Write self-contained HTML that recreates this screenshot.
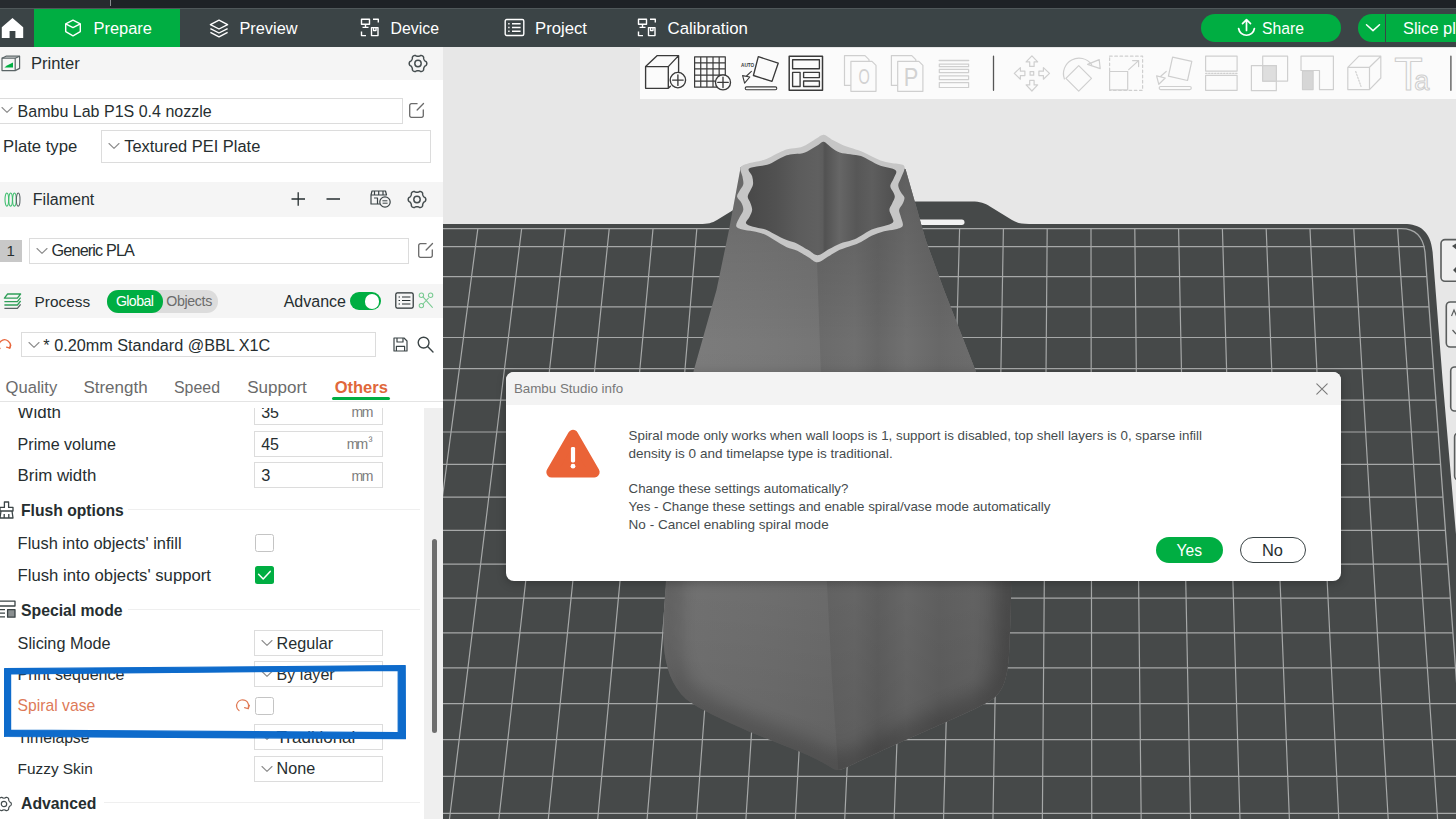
<!DOCTYPE html><html><head><meta charset="utf-8"><title>Bambu Studio</title><style>
*{margin:0;padding:0;box-sizing:border-box}
html,body{width:1456px;height:819px;overflow:hidden;background:#e7e7e7;font-family:"Liberation Sans",sans-serif}
.t{position:absolute;white-space:nowrap;line-height:1}
.b{position:absolute}
svg{position:absolute;overflow:visible}
#vp{left:0;top:0}
#panel{position:absolute;left:0;top:47px;width:443px;height:772px;background:#fff;overflow:hidden}
#top{position:absolute;left:0;top:0;width:1456px;height:47px;background:#3b4446;overflow:hidden}
#dlg{position:absolute;left:506px;top:372px;width:835px;height:209px;background:#fff;border-radius:8px;overflow:hidden;box-shadow:0 2px 10px rgba(0,0,0,.25)}
.inp{position:absolute;border:1px solid #dcdcdc;background:#fff}
</style></head><body><svg id="vp" width="1456" height="819" viewBox="0 0 1456 819"><defs>
<linearGradient id="gl" gradientUnits="userSpaceOnUse" x1="660" y1="0" x2="840" y2="0"><stop offset="0" stop-color="#8a8a8a"/><stop offset="0.12" stop-color="#7c7c7c"/><stop offset="0.55" stop-color="#797979"/><stop offset="1" stop-color="#747474"/></linearGradient>
<linearGradient id="gr" gradientUnits="userSpaceOnUse" x1="820" y1="0" x2="1012" y2="0"><stop offset="0" stop-color="#6b6b6b"/><stop offset="0.18" stop-color="#6f6f6f"/><stop offset="0.3" stop-color="#676767"/><stop offset="0.45" stop-color="#707070"/><stop offset="0.62" stop-color="#686868"/><stop offset="0.8" stop-color="#6c6c6c"/><stop offset="1" stop-color="#626262"/></linearGradient>
<linearGradient id="gv" gradientUnits="userSpaceOnUse" x1="0" y1="160" x2="0" y2="770"><stop offset="0" stop-color="#000" stop-opacity="0.16"/><stop offset="0.3" stop-color="#000" stop-opacity="0"/><stop offset="0.62" stop-color="#000" stop-opacity="0.07"/><stop offset="1" stop-color="#000" stop-opacity="0.16"/></linearGradient>
<linearGradient id="gh" gradientUnits="userSpaceOnUse" x1="745" y1="0" x2="900" y2="0"><stop offset="0" stop-color="#484848"/><stop offset="0.2" stop-color="#515151"/><stop offset="0.35" stop-color="#5c5c5c"/><stop offset="0.47" stop-color="#606060"/><stop offset="0.5" stop-color="#5d5d5d"/><stop offset="0.515" stop-color="#525252"/><stop offset="0.61" stop-color="#666"/><stop offset="0.72" stop-color="#575757"/><stop offset="0.82" stop-color="#5e5e5e"/><stop offset="1" stop-color="#4c4c4c"/></linearGradient>
<filter id="bl" x="-20%" y="-20%" width="140%" height="140%"><feGaussianBlur stdDeviation="9"/></filter><clipPath id="cp"><rect x="443" y="47" width="1013" height="772"/></clipPath>
</defs><g clip-path="url(#cp)"><rect x="443" y="47" width="1013" height="772" fill="#e7e7e7"/><path d="M430 224 H700 C708 224 712 223 717 220 L739 206.5 C744 203.3 749 201.6 757 201.6 H972 C980 201.6 985 203.3 990 206.5 L1012 220 C1017 223 1021 224 1029 224 H1404 C1420 224 1430.5 231 1432.6 252 L1442.6 380 L1456.5 540 L1482 830 H430 Z" fill="#464949"/><rect x="917" y="219.6" width="47.5" height="5.4" rx="2.7" fill="#f2f2f2"/><path d="M430 246.63 L1424.59 246.63 M430 276.53 L1426.79 276.53 M430 306.81 L1429.01 306.81 M430 337.49 L1431.26 337.49 M430 368.58 L1433.54 368.58 M430 400.07 L1435.86 400.07 M430 431.99 L1438.20 431.99 M430 464.34 L1440.57 464.34 M430 497.13 L1442.98 497.13 M430 530.36 L1445.42 530.36 M430 564.05 L1447.89 564.05 M430 598.20 L1450.40 598.20 M430 632.83 L1452.94 632.83 M430 667.94 L1455.52 667.94 M430 703.55 L1458.13 703.55 M430 739.66 L1460.78 739.66 M430 776.30 L1463.47 776.30 M430 813.46 L1466.20 813.46 M390.26 228.6 L299.60 830 M434.06 228.6 L349.11 830 M477.85 228.6 L398.62 830 M521.65 228.6 L448.13 830 M565.45 228.6 L497.65 830 M609.24 228.6 L547.16 830 M653.04 228.6 L596.67 830 M696.83 228.6 L646.18 830 M740.63 228.6 L695.69 830 M784.43 228.6 L745.20 830 M828.22 228.6 L794.71 830 M872.02 228.6 L844.23 830 M915.81 228.6 L893.74 830 M959.61 228.6 L943.25 830 M1003.41 228.6 L992.76 830 M1047.20 228.6 L1042.27 830 M1091.00 228.6 L1091.78 830 M1134.80 228.6 L1141.29 830 M1178.59 228.6 L1190.81 830 M1222.39 228.6 L1240.32 830 M1266.18 228.6 L1289.83 830 M1309.98 228.6 L1339.34 830 M1353.78 228.6 L1388.85 830 M1397.57 228.6 L1438.36 830" fill="none" stroke="#a6a8a8" stroke-width="1.2"/><path d="M430 228.6 H1401.3 Q1422.3 228.6 1425.0 252 L1467.4 830" fill="none" stroke="#a6a8a8" stroke-width="1.3"/><rect x="1441.0" y="239.6" width="40" height="41.7" rx="4" fill="#efefef" stroke="#5a5d5d" stroke-width="1.6"/><rect x="1446.3" y="302.0" width="40" height="45.0" rx="4" fill="#efefef" stroke="#5a5d5d" stroke-width="1.6"/><rect x="1450.7" y="367.0" width="40" height="44.0" rx="4" fill="#efefef" stroke="#5a5d5d" stroke-width="1.6"/><rect x="1454.6" y="433.0" width="40" height="47.0" rx="4" fill="#efefef" stroke="#5a5d5d" stroke-width="1.6"/><path d="M1452 246 L1457 250 L1457 243 Z M1453 270 L1457 266 V274 Z" fill="#4a4d4d"/><path d="M1451.5 316 L1454 310 L1456.5 316 M1452.5 330 L1456 334" fill="none" stroke="#5a5d5d" stroke-width="1.2"/><clipPath id="vc"><path d="M740.7 167 L729 230 L716.5 290 L693.6 371 C683 430 670 520 666 581 C664 610 662.6 628 663.8 645 C665.5 668 672 686 686 699 C700 710 722 719 750 732 L798 751 C815 758 826 764 832 768 C836 770.6 840 770.6 845 768 C856 763 872 755 895.5 744.5 L945 722.5 C968 712 985 705 994 698 C1004 690 1007.5 676 1009 655 C1010 630 1011.5 605 1011 581 C1008 520 990 430 975.7 371 L944 290 L925.7 240 L905.5 169 L820 150 Z"/></clipPath><g clip-path="url(#vc)"><path d="M640 140 H1040 V790 H640 Z" fill="url(#gl)"/><path d="M817 230 L817 262 L820.8 371 L826.8 581.5 L832 680 L838.5 772 L1040 790 V140 H817 Z" fill="url(#gr)"/><path d="M640 140 H1040 V790 H640 Z" fill="url(#gv)"/><path d="M669 545 C667 560 666.5 570 666 581 C664 610 662.6 628 663.8 645 C665.5 668 672 686 686 699 C700 710 722 719 750 732 L798 751 C815 758 826 764 832 768 C836 770.6 840 770.6 845 768 C856 763 872 755 895.5 744.5 L945 722.5 C968 712 985 705 994 698 C1004 690 1007.5 676 1009 655 C1010 630 1011.5 605 1011 581 C1010.6 570 1010 560 1009 545" fill="none" stroke="#000" stroke-opacity="0.20" stroke-width="30" filter="url(#bl)"/></g><path d="M823.86 134.74 C826.51 135.03 829.76 138.43 832.71 140.05 C835.66 141.68 838.61 143.21 841.56 144.48 C844.52 145.75 847.17 146.55 850.42 147.67 C853.66 148.79 857.80 149.91 861.04 151.21 C864.29 152.51 866.65 153.92 869.90 155.46 C873.14 156.99 876.98 159.15 880.52 160.42 C884.06 161.69 887.46 162.34 891.15 163.07 C894.84 163.81 900.44 163.81 902.66 164.84 C904.87 165.88 904.72 167.06 904.43 169.27 C904.13 171.48 901.92 175.47 900.89 178.13 C899.85 180.78 898.23 182.85 898.23 185.21 C898.23 187.57 899.85 190.23 900.89 192.29 C901.92 194.36 904.13 195.69 904.43 197.60 C904.72 199.52 903.54 201.74 902.66 203.80 C901.77 205.87 899.41 207.79 899.12 210.00 C898.82 212.21 900.30 214.43 900.89 217.08 C901.48 219.74 903.69 223.87 902.66 225.94 C901.63 228.00 897.79 228.59 894.69 229.48 C891.59 230.37 887.90 230.22 884.06 231.25 C880.23 232.28 875.50 233.91 871.67 235.68 C867.83 237.45 864.29 240.25 861.04 241.88 C857.80 243.50 855.73 244.09 852.19 245.42 C848.65 246.75 843.63 248.07 839.79 249.85 C835.96 251.62 832.86 253.98 829.17 256.04 C825.48 258.11 821.20 262.09 817.66 262.24 C814.12 262.39 811.31 258.85 807.92 256.93 C804.52 255.01 800.83 252.35 797.29 250.73 C793.75 249.11 790.50 248.96 786.67 247.19 C782.83 245.42 777.81 242.17 774.27 240.11 C770.73 238.04 768.96 236.27 765.42 234.79 C761.88 233.32 756.86 232.14 753.02 231.25 C749.18 230.37 745.20 230.37 742.40 229.48 C739.59 228.59 736.64 228.00 736.20 225.94 C735.76 223.87 738.56 219.74 739.74 217.08 C740.92 214.43 742.99 212.36 743.28 210.00 C743.58 207.64 742.54 205.13 741.51 202.92 C740.48 200.70 737.38 198.79 737.08 196.72 C736.79 194.65 738.71 192.59 739.74 190.52 C740.77 188.46 742.84 186.68 743.28 184.32 C743.72 181.96 742.84 179.16 742.40 176.35 C741.95 173.55 739.44 169.71 740.63 167.50 C741.81 165.29 745.94 164.25 749.48 163.07 C753.02 161.89 758.33 161.45 761.88 160.42 C765.42 159.38 767.48 158.35 770.73 156.88 C773.98 155.40 778.40 152.89 781.35 151.56 C784.31 150.23 785.19 149.64 788.44 148.91 C791.68 148.17 797.29 148.17 800.83 147.14 C804.38 146.10 807.03 144.18 809.69 142.71 C812.34 141.23 814.41 139.61 816.77 138.28 C819.13 136.95 821.20 134.44 823.86 134.74 Z" fill="#c6c6c6"/><path d="M823.86 141.82 C825.92 142.21 828.28 145.36 830.94 147.14 C833.59 148.91 836.55 151.27 839.79 152.45 C843.04 153.63 846.88 153.63 850.42 154.22 C853.96 154.81 857.80 154.96 861.04 155.99 C864.29 157.02 866.65 158.79 869.90 160.42 C873.14 162.04 876.24 164.11 880.52 165.73 C884.80 167.35 893.36 168.09 895.57 170.16 C897.79 172.22 894.69 175.47 893.80 178.13 C892.92 180.78 890.26 183.59 890.26 186.09 C890.26 188.60 893.07 191.26 893.80 193.18 C894.54 195.10 894.98 195.83 894.69 197.60 C894.39 199.38 892.92 201.74 892.03 203.80 C891.15 205.87 889.38 207.79 889.38 210.00 C889.38 212.21 891.44 215.02 892.03 217.08 C892.62 219.15 894.25 220.92 892.92 222.40 C891.59 223.87 887.61 224.76 884.06 225.94 C880.52 227.12 875.50 227.86 871.67 229.48 C867.83 231.10 864.29 233.91 861.04 235.68 C857.80 237.45 855.73 238.78 852.19 240.11 C848.65 241.43 843.63 242.17 839.79 243.65 C835.96 245.12 832.86 247.04 829.17 248.96 C825.48 250.88 821.20 255.01 817.66 255.16 C814.12 255.31 811.31 251.76 807.92 249.85 C804.52 247.93 800.83 245.27 797.29 243.65 C793.75 242.02 790.50 241.73 786.67 240.11 C782.83 238.48 777.81 235.68 774.27 233.91 C770.73 232.14 768.96 230.66 765.42 229.48 C761.88 228.30 756.27 227.86 753.02 226.82 C749.77 225.79 746.53 224.91 745.94 223.28 C745.35 221.66 748.45 219.30 749.48 217.08 C750.51 214.87 751.99 212.36 752.14 210.00 C752.28 207.64 751.10 205.13 750.36 202.92 C749.63 200.70 747.71 198.79 747.71 196.72 C747.71 194.65 749.48 192.59 750.36 190.52 C751.25 188.46 752.73 186.68 753.02 184.32 C753.32 181.96 752.87 178.86 752.14 176.35 C751.40 173.85 747.86 170.89 748.59 169.27 C749.33 167.65 753.46 167.35 756.56 166.62 C759.66 165.88 763.94 165.88 767.19 164.84 C770.43 163.81 773.09 161.89 776.04 160.42 C778.99 158.94 782.24 157.02 784.90 155.99 C787.55 154.96 789.03 154.66 791.98 154.22 C794.93 153.78 799.36 154.22 802.60 153.33 C805.85 152.45 808.80 150.32 811.46 148.91 C814.12 147.49 816.48 146.01 818.54 144.83 C820.61 143.65 821.79 141.44 823.86 141.82 Z" fill="url(#gh)"/></g></svg><div class="b" style="left:640.2px;top:48.0px;width:815.8px;height:51.0px;background:#fbfbfb"></div><svg style="left:0;top:0" width="1456" height="110" viewBox="0 0 1456 110" fill="none" stroke-linejoin="round" stroke-linecap="round"><g stroke="#3a3a3a" stroke-width="1.35"><path d="M645.6 66.6 H668.3 V88.3 H645.6 Z M645.6 66.6 L657.3 55.6 H678.6 L668.3 66.6 M678.6 55.6 V72 M668.3 88.3 L670.4 86.2"/><circle cx="677.9" cy="80.1" r="7.7" fill="#fbfbfb"/><path d="M672.6 80.1 H683.2 M677.9 74.8 V85.4"/><path d="M694.60 56.8 V87.2 M694.6 56.80 H725.3 M700.74 56.8 V87.2 M694.6 62.88 H725.3 M706.88 56.8 V87.2 M694.6 68.96 H725.3 M713.02 56.8 V87.2 M694.6 75.04 H725.3 M719.16 56.8 V87.2 M694.6 81.12 H725.3 M725.30 56.8 V87.2 M694.6 87.20 H725.3" stroke-width="1.2"/><circle cx="723" cy="82.4" r="7.5" fill="#fbfbfb"/><path d="M717.8 82.4 H728.2 M723 77.2 V87.6"/><path d="M758.3 56.7 L778.2 63.2 L772 81.4 L753.4 75.5 Z"/><path d="M751.4 71.4 L746.5 76 M742.6 75.6 L749.8 77 L744.6 83.2 Z" stroke-width="1.1"/><rect x="745.2" y="86.9" width="31.6" height="2.8" rx="1.4" stroke-width="1.1"/><rect x="789.2" y="56.3" width="33.3" height="33.9" stroke-width="1.5"/><rect x="792.6" y="59.7" width="26.8" height="9"/><rect x="792.6" y="72.4" width="7.5" height="14.1"/><rect x="803.6" y="72.4" width="15.8" height="5.2"/><rect x="803.6" y="81" width="15.8" height="5.5"/><path d="M993.5 56.2 V90.3 M1450.9 56.2 V90.3" stroke="#555" stroke-width="1.3"/></g><g stroke="#cfcfcf" stroke-width="1.2"><path d="M844.5 55.6 H865.0 L869.0 59.6 V85.4 H844.5 Z" fill="#fbfbfb"/><path d="M850.9 61.3 H872.0 L876.0 65.3 V91.3 H850.9 Z" fill="#fbfbfb"/><path d="M891.4 55.6 H911.8 L915.8 59.6 V85.4 H891.4 Z" fill="#fbfbfb"/><path d="M897.7 61.3 H918.9 L922.9 65.3 V91.3 H897.7 Z" fill="#fbfbfb"/><path d="M939.3 60.5 H968.6" stroke-width="1.6"/><rect x="939.3" y="64.1" width="29.3" height="2.6"/><rect x="939.3" y="69.4" width="29.3" height="3.2"/><rect x="939.3" y="75.8" width="29.3" height="3.8"/><rect x="939.3" y="82.6" width="29.3" height="4.9"/><path d="M-2.2 -7 V-11.5 H-5.8 L0 -17.6 L5.8 -11.5 H2.2 V-7 Z" transform="translate(1031.9 73.4) rotate(0)"/><path d="M-2.2 -7 V-11.5 H-5.8 L0 -17.6 L5.8 -11.5 H2.2 V-7 Z" transform="translate(1031.9 73.4) rotate(90)"/><path d="M-2.2 -7 V-11.5 H-5.8 L0 -17.6 L5.8 -11.5 H2.2 V-7 Z" transform="translate(1031.9 73.4) rotate(180)"/><path d="M-2.2 -7 V-11.5 H-5.8 L0 -17.6 L5.8 -11.5 H2.2 V-7 Z" transform="translate(1031.9 73.4) rotate(270)"/><rect x="1030.1" y="71.6" width="3.6" height="3.6"/><path d="M1078.7 65.6 L1091.5 78.4 L1078.7 91.2 L1065.9 78.4 Z"/><path d="M1064.4 79 A15.6 15.6 0 0 1 1091.6 64.4"/><path d="M1087.6 64.4 L1099.2 59.6 L1100.2 68.6 Z"/><rect x="1109.6" y="56.2" width="33" height="34.1" stroke-dasharray="2.6 2.6"/><rect x="1109.6" y="71.5" width="18.1" height="18.4" fill="#fbfbfb"/><path d="M1128.7 69.6 L1138.3 60.9 M1132.6 60.6 H1138.6 V66.6"/><path d="M1172.6 57.1 L1191.8 61.3 L1187.5 80.5 L1168.4 76.2 Z"/><path d="M1166.2 71.5 L1161 76 M1156.6 75.8 L1165.2 78 L1158.8 84.3 Z"/><rect x="1159.2" y="86.5" width="32.1" height="3.1" rx="1.5"/><rect x="1205.6" y="56.2" width="31.5" height="14.9"/><rect x="1205.6" y="75.4" width="31.5" height="14.9"/><path d="M1205.6 73.3 H1237.1" stroke-dasharray="1.5 1.5"/><rect x="1262.7" y="56.2" width="24.9" height="24.9"/><rect x="1251.4" y="65.6" width="24.9" height="25.1"/><rect x="1262.7" y="65.6" width="13.6" height="15.5" fill="#dedede"/><path d="M1301 56.2 H1333.4 V89.6 H1319.5 V70.5 H1301 Z"/><rect x="1302.5" y="71.1" width="10.6" height="18.5" fill="#d6d6d6"/><path d="M1347.8 67.3 H1369.5 V89.6 H1347.8 Z M1347.8 67.3 L1358.9 56.2 H1380.8 L1369.5 67.3 M1380.8 56.2 V78 L1369.5 89.6"/><path d="M1355.7 71.5 L1361 86.4" stroke-dasharray="1.4 1.6"/></g><text x="741" y="67" font-family="Liberation Sans,sans-serif" font-size="5.2" font-weight="bold" fill="#3a3a3a" stroke="none" textLength="13.2" lengthAdjust="spacingAndGlyphs">AUTO</text><text transform="translate(1394.3 89.6) scale(1 1)" font-family="Liberation Sans,sans-serif" font-size="46.6" fill="#fbfbfb" stroke="#cfcfcf" stroke-width="1.1">T</text><text transform="translate(858.4 84.4) scale(0.66 1)" font-family="Liberation Sans,sans-serif" font-size="22" fill="#d2d2d2" stroke="none">O</text><text transform="translate(903.8 86.4) scale(0.82 1)" font-family="Liberation Sans,sans-serif" font-size="26.6" fill="#d2d2d2" stroke="none">P</text><text x="1414.2" y="89.8" font-family="Liberation Sans,sans-serif" font-size="27" fill="#fbfbfb" stroke="#cfcfcf" stroke-width="1.1">a</text></svg><div id="top"><div class="b" style="left:0.0px;top:0.0px;width:1456.0px;height:8.0px;background:#1e2226"></div><div class="b" style="left:0.0px;top:0.0px;width:110.0px;height:8.0px;background:#272b2f"></div><div class="b" style="left:110.0px;top:0.0px;width:1.0px;height:6.0px;background:#8a8e90"></div><div class="b" style="left:0.0px;top:8.0px;width:1456.0px;height:1.0px;background:#50585a"></div><div class="b" style="left:34.0px;top:9.0px;width:146.0px;height:38.0px;background:#00ae42"></div><svg style="left:1px;top:17px" width="23" height="22" viewBox="0 0 23 22"><path d="M11.5 1 L0.8 10.2 V21 H8.6 V14 H14.4 V21 H22.2 V10.2 Z" fill="#fff"/></svg><svg style="left:64px;top:19px" width="18" height="18" viewBox="0 0 18 18" fill="none" stroke="#fff" stroke-width="1.4" stroke-linejoin="round"><path d="M9 1.2 L16.3 4.8 V12.6 L9 16.8 L1.7 12.6 V4.8 Z"/><path d="M1.7 4.8 L9 8.6 L16.3 4.8"/></svg><span class="t" style="left:93.5px;top:20.0px;font-size:16.44px;color:#fff;">Prepare</span><svg style="left:209px;top:19px" width="20" height="19" viewBox="0 0 20 19" fill="none" stroke="#fff" stroke-width="1.4" stroke-linejoin="round"><path d="M10 1.2 L18.6 5.6 L10 10 L1.4 5.6 Z"/><path d="M1.4 9.6 L10 14 L18.6 9.6"/><path d="M1.4 13.4 L10 17.8 L18.6 13.4"/></svg><span class="t" style="left:239.5px;top:20.0px;font-size:16.31px;color:#fff;">Preview</span><svg style="left:360px;top:18px" width="20" height="19" viewBox="0 0 20 19" fill="none" stroke="#fff" stroke-width="1.4" stroke-linejoin="round"><path d="M1.5 1.2 H9.5 V6.2 H1.5 Z M5.5 6.2 V9 M2.5 9.4 H8.5"/><path d="M13 1.2 H18.3 V4.6"/><path d="M1.5 13.4 V17.6 H6"/><path d="M11.5 9.6 H18 V17.6 H11.5 Z M13.6 9.6 V12.6 H16 V9.6"/></svg><span class="t" style="left:390.5px;top:21.0px;font-size:15.87px;color:#fff;">Device</span><svg style="left:504px;top:18px" width="21" height="19" viewBox="0 0 21 19" fill="none" stroke="#fff" stroke-width="1.4" stroke-linejoin="round"><rect x="1.2" y="1.5" width="18.6" height="16" rx="1.5"/><path d="M4.2 5.8 H5.6 M8 5.8 H16.6 M4.2 9.5 H5.6 M8 9.5 H16.6 M4.2 13.2 H5.6 M8 13.2 H16.6"/></svg><span class="t" style="left:535.0px;top:21.0px;font-size:16.71px;color:#fff;">Project</span><svg style="left:637px;top:18px" width="20" height="19" viewBox="0 0 20 19" fill="none" stroke="#fff" stroke-width="1.4" stroke-linejoin="round"><path d="M1.5 1.2 H9.5 V6.2 H1.5 Z M5.5 6.2 V9 M2.5 9.4 H8.5"/><path d="M13 1.2 H18.3 V4.6"/><path d="M1.5 13.4 V17.6 H6"/><path d="M11.5 9.6 H18 V17.6 H11.5 Z M13.6 9.6 V12.6 H16 V9.6"/></svg><span class="t" style="left:667.5px;top:21.0px;font-size:16.84px;color:#fff;">Calibration</span><div class="b" style="left:1200.5px;top:14.0px;width:140.0px;height:27.5px;background:#00ae42;border-radius:14px"></div><svg style="left:1236px;top:17px" width="21" height="21" viewBox="0 0 21 21" fill="none" stroke="#fff" stroke-width="1.7" stroke-linecap="round" stroke-linejoin="round"><path d="M10.5 13.5 V3 M6.5 6.6 L10.5 2.6 L14.5 6.6"/><path d="M2.6 11.5 A8 8 0 0 0 18.4 11.5"/></svg><span class="t" style="left:1262.0px;top:21.0px;font-size:15.74px;color:#fff;">Share</span><div class="b" style="left:1357.5px;top:14.0px;width:142.5px;height:27.5px;background:#00ae42;border-radius:14px"></div><div class="b" style="left:1384.6px;top:14.0px;width:1.2px;height:27.5px;background:#3b4446"></div><svg style="left:1365px;top:23px" width="16" height="10" viewBox="0 0 16 10" fill="none" stroke="#fff" stroke-width="1.5" stroke-linecap="round" stroke-linejoin="round"><path d="M1.5 1.8 L8 7.6 L14.5 1.8"/></svg><span class="t" style="left:1403.0px;top:20.0px;font-size:16.40px;color:#fff;">Slice plate</span></div><div id="panel"><div class="b" style="left:0.0px;top:0.0px;width:443.0px;height:33.0px;background:#f5f5f5"></div><svg style="left:1px;top:8px" width="20" height="17" viewBox="0 0 20 17" fill="none" stroke="#5a6466" stroke-width="1.2" stroke-linejoin="round"><path d="M1 3.2 H14.2 V15.6 H1 Z"/><path d="M14.2 3.2 L18.6 1.2 V13.4 L14.2 15.6"/><path d="M1 3.2 L5 1.2 H18.6"/><path d="M3.4 12.6 H12 V7.4 L6 10.6 Z" fill="#00ae42" stroke="none"/></svg><span class="t" style="left:30.9px;top:9.0px;font-size:16.57px;color:#262e30;">Printer</span><svg style="left:0;top:0" width="1" height="1" fill="none" stroke="#454d4f" stroke-width="1.45" stroke-linejoin="round"><path d="M426.83 16.50 L426.77 17.08 L426.60 17.63 L426.31 18.15 L425.73 18.57 L425.14 18.92 L424.77 19.31 L424.47 19.69 L424.22 20.09 L424.00 20.51 L423.82 20.96 L423.67 21.47 L423.66 22.16 L423.58 22.87 L423.28 23.38 L422.88 23.81 L422.42 24.15 L421.89 24.39 L421.32 24.51 L420.72 24.52 L420.07 24.23 L419.47 23.89 L418.96 23.77 L418.47 23.70 L418.00 23.68 L417.53 23.70 L417.04 23.77 L416.53 23.89 L415.93 24.23 L415.28 24.52 L414.68 24.51 L414.11 24.39 L413.58 24.15 L413.12 23.81 L412.72 23.38 L412.42 22.87 L412.34 22.16 L412.33 21.47 L412.18 20.96 L412.00 20.51 L411.78 20.09 L411.53 19.69 L411.23 19.31 L410.86 18.92 L410.27 18.57 L409.69 18.15 L409.40 17.63 L409.23 17.08 L409.17 16.50 L409.23 15.92 L409.40 15.37 L409.69 14.85 L410.27 14.43 L410.86 14.08 L411.23 13.69 L411.53 13.31 L411.78 12.91 L412.00 12.49 L412.18 12.04 L412.33 11.53 L412.34 10.84 L412.42 10.13 L412.72 9.62 L413.12 9.19 L413.58 8.85 L414.11 8.61 L414.68 8.49 L415.28 8.48 L415.93 8.77 L416.53 9.11 L417.04 9.23 L417.53 9.30 L418.00 9.32 L418.47 9.30 L418.96 9.23 L419.47 9.11 L420.07 8.77 L420.72 8.48 L421.32 8.49 L421.89 8.61 L422.42 8.85 L422.88 9.19 L423.28 9.62 L423.58 10.13 L423.66 10.84 L423.67 11.53 L423.82 12.04 L424.00 12.49 L424.22 12.91 L424.47 13.31 L424.77 13.69 L425.14 14.08 L425.73 14.43 L426.31 14.85 L426.60 15.37 L426.77 15.92 Z"/><circle cx="418.0" cy="16.5" r="3.2"/></svg><div class="inp" style="left:-3.0px;top:51.0px;width:406.0px;height:26.0px"></div><svg style="left:1.0px;top:59.0px" width="12" height="8" viewBox="0 0 12 8" fill="none" stroke="#8c8c8c" stroke-width="1.1" stroke-linecap="round" stroke-linejoin="round"><path d="M1 1.5 L6 6.3 L11 1.5"/></svg><span class="t" style="left:17.6px;top:56.0px;font-size:16.02px;color:#262e30;">Bambu Lab P1S 0.4 nozzle</span><svg style="left:408.0px;top:54.5px" width="17" height="17" viewBox="0 0 16 16" fill="none" stroke="#6b6b6b" stroke-width="1.25" stroke-linecap="round" stroke-linejoin="round"><path d="M8.5 1.6 H3.2 A1.6 1.6 0 0 0 1.6 3.2 V12.8 A1.6 1.6 0 0 0 3.2 14.4 H12.8 A1.6 1.6 0 0 0 14.4 12.8 V7.5"/><path d="M8.6 7.6 L14.6 1.4"/></svg><span class="t" style="left:3.1px;top:92.0px;font-size:16.68px;color:#262e30;">Plate type</span><div class="inp" style="left:101.0px;top:82.5px;width:330.0px;height:33.1px"></div><svg style="left:108.0px;top:95.0px" width="12" height="8" viewBox="0 0 12 8" fill="none" stroke="#8c8c8c" stroke-width="1.1" stroke-linecap="round" stroke-linejoin="round"><path d="M1 1.5 L6 6.3 L11 1.5"/></svg><span class="t" style="left:124.2px;top:91.0px;font-size:16.46px;color:#262e30;">Textured PEI Plate</span><div class="b" style="left:0.0px;top:135.0px;width:443.0px;height:35.0px;background:#f5f5f5"></div><svg style="left:4px;top:144px" width="17" height="17" viewBox="0 0 17 17" fill="none" stroke-width="1.05"><ellipse cx="2.8" cy="8.5" rx="1.8" ry="6.6" stroke="#3cbd6c"/><ellipse cx="6.6" cy="8.5" rx="1.8" ry="6.6" stroke="#3cbd6c"/><ellipse cx="10.4" cy="8.5" rx="1.8" ry="6.6" stroke="#3cbd6c"/><ellipse cx="14.2" cy="8.5" rx="1.8" ry="6.6" stroke="#5a6466"/></svg><span class="t" style="left:32.8px;top:144.0px;font-size:16.04px;color:#262e30;">Filament</span><svg style="left:291px;top:145px" width="50" height="14" viewBox="0 0 50 14" fill="none" stroke="#262e30" stroke-width="1.3"><path d="M0.5 7 H14 M7.2 0.3 V13.7 M35.5 7 H49"/></svg><svg style="left:370px;top:143px" width="21" height="18" viewBox="0 0 21 18" fill="none" stroke="#3b4446" stroke-width="1.2" stroke-linejoin="round"><path d="M1 5 V14 H11 M1 5 L2 1 H15.5 L16.5 5 Z M4.5 1 V5 M8.7 1 V5 M13 1 V5 M4 8 H7.5 V14"/><circle cx="15" cy="12" r="5.2" fill="#f5f5f5"/><path d="M12.4 10.8 H17.4 M17.6 13.2 H12.6" stroke-width="1"/></svg><svg style="left:0;top:0" width="1" height="1" fill="none" stroke="#454d4f" stroke-width="1.45" stroke-linejoin="round"><path d="M425.83 152.50 L425.77 153.08 L425.60 153.63 L425.31 154.15 L424.73 154.57 L424.14 154.92 L423.77 155.31 L423.47 155.69 L423.22 156.09 L423.00 156.51 L422.82 156.96 L422.67 157.47 L422.66 158.16 L422.58 158.87 L422.28 159.38 L421.88 159.81 L421.42 160.15 L420.89 160.39 L420.32 160.51 L419.72 160.52 L419.07 160.23 L418.47 159.89 L417.96 159.77 L417.47 159.70 L417.00 159.68 L416.53 159.70 L416.04 159.77 L415.53 159.89 L414.93 160.23 L414.28 160.52 L413.68 160.51 L413.11 160.39 L412.58 160.15 L412.12 159.81 L411.72 159.38 L411.42 158.87 L411.34 158.16 L411.33 157.47 L411.18 156.96 L411.00 156.51 L410.78 156.09 L410.53 155.69 L410.23 155.31 L409.86 154.92 L409.27 154.57 L408.69 154.15 L408.40 153.63 L408.23 153.08 L408.17 152.50 L408.23 151.92 L408.40 151.37 L408.69 150.85 L409.27 150.43 L409.86 150.08 L410.23 149.69 L410.53 149.31 L410.78 148.91 L411.00 148.49 L411.18 148.04 L411.33 147.53 L411.34 146.84 L411.42 146.13 L411.72 145.62 L412.12 145.19 L412.58 144.85 L413.11 144.61 L413.68 144.49 L414.28 144.48 L414.93 144.77 L415.53 145.11 L416.04 145.23 L416.53 145.30 L417.00 145.32 L417.47 145.30 L417.96 145.23 L418.47 145.11 L419.07 144.77 L419.72 144.48 L420.32 144.49 L420.89 144.61 L421.42 144.85 L421.88 145.19 L422.28 145.62 L422.58 146.13 L422.66 146.84 L422.67 147.53 L422.82 148.04 L423.00 148.49 L423.22 148.91 L423.47 149.31 L423.77 149.69 L424.14 150.08 L424.73 150.43 L425.31 150.85 L425.60 151.37 L425.77 151.92 Z"/><circle cx="417.0" cy="152.5" r="3.2"/></svg><div class="b" style="left:0.0px;top:192.7px;width:22.0px;height:22.1px;background:#c8c8c8"></div><span class="t" style="left:6.6px;top:196.0px;font-size:15.00px;color:#262e30;letter-spacing:-2.343px;">1</span><div class="inp" style="left:29.4px;top:191.0px;width:380.1px;height:26.0px"></div><svg style="left:36.0px;top:199.5px" width="12" height="8" viewBox="0 0 12 8" fill="none" stroke="#8c8c8c" stroke-width="1.1" stroke-linecap="round" stroke-linejoin="round"><path d="M1 1.5 L6 6.3 L11 1.5"/></svg><span class="t" style="left:51.6px;top:195.0px;font-size:16.20px;color:#262e30;letter-spacing:-0.845px;">Generic PLA</span><svg style="left:416.5px;top:195.0px" width="17" height="17" viewBox="0 0 16 16" fill="none" stroke="#6b6b6b" stroke-width="1.25" stroke-linecap="round" stroke-linejoin="round"><path d="M8.5 1.6 H3.2 A1.6 1.6 0 0 0 1.6 3.2 V12.8 A1.6 1.6 0 0 0 3.2 14.4 H12.8 A1.6 1.6 0 0 0 14.4 12.8 V7.5"/><path d="M8.6 7.6 L14.6 1.4"/></svg><div class="b" style="left:0.0px;top:237.0px;width:443.0px;height:34.0px;background:#f5f5f5"></div><svg style="left:3px;top:246px" width="19" height="17" viewBox="0 0 19 17" fill="none" stroke="#2f9e58" stroke-width="1.3" stroke-linejoin="round"><path d="M4.6 1 H17.6 L14.4 5.2 H1.4 Z"/><path d="M1.4 8.6 H14.4 L17.6 4.6"/><path d="M1.4 12 H14.4 L17.6 8"/><path d="M1.4 15.4 H14.4 L17.6 11.4" stroke="#5a6466"/></svg><span class="t" style="left:34.6px;top:247.0px;font-size:15.39px;color:#262e30;">Process</span><div class="b" style="left:106.6px;top:243.0px;width:111.9px;height:22.6px;background:#dcdcdc;border-radius:11.3px"></div><div class="b" style="left:106.6px;top:243.0px;width:56.6px;height:22.6px;background:#00ae42;border-radius:11.3px"></div><span class="t" style="left:115.9px;top:247.0px;font-size:14.20px;color:#fff;letter-spacing:-0.610px;">Global</span><span class="t" style="left:166.3px;top:247.0px;font-size:14.20px;color:#6b6b6b;letter-spacing:-0.357px;">Objects</span><span class="t" style="left:283.7px;top:246.0px;font-size:16.03px;color:#262e30;">Advance</span><div class="b" style="left:350.2px;top:245.4px;width:30.6px;height:18.0px;background:#00ae42;border-radius:9px"></div><div class="b" style="left:364.6px;top:247.2px;width:14.4px;height:14.4px;background:#fff;border-radius:8px"></div><svg style="left:395px;top:245px" width="19" height="17" viewBox="0 0 19 17" fill="none" stroke="#262e30" stroke-width="1.2" stroke-linejoin="round"><rect x="0.8" y="0.8" width="17.4" height="15.4" rx="1.6"/><path d="M3.6 5 H5 M7 5 H15.4 M3.6 8.5 H5 M7 8.5 H15.4 M3.6 12 H5 M7 12 H15.4"/></svg><svg style="left:418px;top:245px" width="16" height="17" viewBox="0 0 16 17" fill="none" stroke="#7acb93" stroke-width="1.05" stroke-linecap="round"><circle cx="3.4" cy="3.2" r="2.2"/><circle cx="3.4" cy="13.6" r="2.2"/><circle cx="12.6" cy="3.2" r="2.2"/><path d="M5 4.8 L14.4 15.4 M5 12 L10.4 6.2"/></svg><svg style="left:-2px;top:290px" width="15" height="15" viewBox="0 0 15 15" fill="none" stroke="#e8663c" stroke-width="1.3" stroke-linecap="round" stroke-linejoin="round"><path d="M2 11.5 A5.6 5.6 0 1 1 11.6 11"/><path d="M8.6 10.2 L11.8 11.2 L12.8 8"/></svg><div class="inp" style="left:21.0px;top:285.2px;width:355.4px;height:25.2px"></div><svg style="left:27.5px;top:294.0px" width="12" height="8" viewBox="0 0 12 8" fill="none" stroke="#8c8c8c" stroke-width="1.1" stroke-linecap="round" stroke-linejoin="round"><path d="M1 1.5 L6 6.3 L11 1.5"/></svg><span class="t" style="left:43.3px;top:290.0px;font-size:16.24px;color:#262e30;">* 0.20mm Standard @BBL X1C</span><svg style="left:392.5px;top:290px" width="15" height="15" viewBox="0 0 15 15" fill="none" stroke="#3b4446" stroke-width="1.2" stroke-linejoin="round"><path d="M1 1 H11 L14 4 V14 H1 Z"/><path d="M4 1 V5 H10 V1 M3.4 14 V9.4 H11.6 V14" /></svg><svg style="left:416.5px;top:289px" width="17" height="17" viewBox="0 0 17 17" fill="none" stroke="#3b4446" stroke-width="1.4" stroke-linecap="round"><circle cx="6.6" cy="6.6" r="5.4"/><path d="M10.6 10.6 L16 16"/></svg><span class="t" style="left:5.6px;top:333.0px;font-size:16.58px;color:#6b6b6b;">Quality</span><span class="t" style="left:83.4px;top:332.0px;font-size:17.01px;color:#6b6b6b;">Strength</span><span class="t" style="left:174.0px;top:333.0px;font-size:15.91px;color:#6b6b6b;">Speed</span><span class="t" style="left:247.2px;top:332.0px;font-size:17.04px;color:#6b6b6b;">Support</span><span class="t" style="left:334.7px;top:332.0px;font-size:16.51px;color:#e0673a;font-weight:bold;">Others</span><div class="b" style="left:0.0px;top:354.0px;width:443.0px;height:1.0px;background:#e4e4e4"></div><div class="b" style="left:332.2px;top:350.2px;width:57.8px;height:3.0px;background:#00ae42;border-radius:1.5px"></div><div style="position:absolute;left:0;top:361px;width:424px;height:411px;overflow:hidden;background:#fff"><span class="t" style="left:17.6px;top:-3.0px;font-size:16.94px;color:#262e30;">Width</span><div class="inp" style="left:254.0px;top:-9.3px;width:128.6px;height:26.1px"></div><span class="t" style="left:261.2px;top:-3.0px;font-size:16.00px;color:#262e30;">35</span><span class="t" style="left:351.4px;top:-3.0px;font-size:14.00px;color:#7d7d7d;letter-spacing:-1.425px;">mm</span><span class="t" style="left:17.6px;top:28.0px;font-size:16.08px;color:#262e30;">Prime volume</span><div class="inp" style="left:254.0px;top:22.6px;width:128.6px;height:26.3px"></div><span class="t" style="left:261.2px;top:29.0px;font-size:16.00px;color:#262e30;">45</span><span class="t" style="left:346.8px;top:29.0px;font-size:14.00px;color:#7d7d7d;letter-spacing:-1.925px;">mm</span><span class="t" style="left:368.6px;top:27.0px;font-size:12.00px;color:#7d7d7d;letter-spacing:1.403px;">³</span><span class="t" style="left:17.6px;top:60.0px;font-size:16.88px;color:#262e30;">Brim width</span><div class="inp" style="left:254.0px;top:54.1px;width:128.6px;height:26.1px"></div><span class="t" style="left:261.2px;top:59.0px;font-size:16.40px;color:#262e30;letter-spacing:-0.321px;">3</span><span class="t" style="left:351.4px;top:61.0px;font-size:14.00px;color:#7d7d7d;letter-spacing:-1.425px;">mm</span><svg style="left:-2px;top:93px" width="17" height="18" viewBox="0 0 17 18" fill="none" stroke="#3b4446" stroke-width="1.3" stroke-linejoin="round"><path d="M6.4 1 H10.6 V6.4 H15 V10 H2 V6.4 H6.4 Z"/><path d="M3 10 L2 17 H15 L14 10 M6.2 13 V17 M10.8 13 V17"/></svg><span class="t" style="left:21.0px;top:95.0px;font-size:15.70px;color:#262e30;font-weight:bold;">Flush options</span><div class="b" style="left:128.0px;top:101.3px;width:292.3px;height:1.0px;background:#efefef"></div><span class="t" style="left:17.6px;top:127.0px;font-size:16.45px;color:#262e30;">Flush into objects' infill</span><div class="b" style="left:255px;top:126.1px;width:18.5px;height:18.3px;background:#fff;border:1.3px solid #c4c4c4;border-radius:2.5px"></div><span class="t" style="left:17.6px;top:160.0px;font-size:16.70px;color:#262e30;">Flush into objects' support</span><div class="b" style="left:255px;top:157.7px;width:18.5px;height:18.3px;background:#00ae42;border-radius:2.5px"></div><svg style="left:255px;top:157.7px" width="18.5" height="18.3" viewBox="0 0 18.5 18.3" fill="none" stroke="#fff" stroke-width="1.5" stroke-linecap="round" stroke-linejoin="round"><path d="M3.6 8.2 L8.2 13 L15.2 5.4"/></svg><svg style="left:-2px;top:192px" width="18" height="19" viewBox="0 0 18 19" fill="none" stroke="#3b4446" stroke-width="1.3" stroke-linejoin="round"><path d="M0 1.2 H17 V6 H0"/><path d="M0 9.6 H7 M0 13.2 H7 M0 16.8 H7"/><rect x="9.6" y="9.6" width="7.4" height="7.6" fill="#8a8f90"/></svg><span class="t" style="left:21.0px;top:195.0px;font-size:15.78px;color:#262e30;font-weight:bold;">Special mode</span><div class="b" style="left:128.0px;top:201.0px;width:292.3px;height:1.0px;background:#efefef"></div><span class="t" style="left:17.6px;top:227.0px;font-size:16.24px;color:#262e30;">Slicing Mode</span><div class="inp" style="left:254.0px;top:221.9px;width:128.6px;height:26.3px"></div><svg style="left:261.0px;top:231.2px" width="12" height="8" viewBox="0 0 12 8" fill="none" stroke="#8c8c8c" stroke-width="1.1" stroke-linecap="round" stroke-linejoin="round"><path d="M1 1.5 L6 6.3 L11 1.5"/></svg><span class="t" style="left:276.6px;top:227.0px;font-size:16.16px;color:#262e30;">Regular</span><span class="t" style="left:17.6px;top:258.0px;font-size:16.02px;color:#262e30;">Print sequence</span><div class="inp" style="left:254.0px;top:253.4px;width:128.6px;height:26.0px"></div><svg style="left:261.0px;top:262.4px" width="12" height="8" viewBox="0 0 12 8" fill="none" stroke="#8c8c8c" stroke-width="1.1" stroke-linecap="round" stroke-linejoin="round"><path d="M1 1.5 L6 6.3 L11 1.5"/></svg><span class="t" style="left:276.6px;top:258.0px;font-size:16.08px;color:#262e30;">By layer</span><span class="t" style="left:17.6px;top:290.0px;font-size:15.69px;color:#dd7a58;">Spiral vase</span><svg style="left:235px;top:290px" width="16" height="15" viewBox="0 0 16 15" fill="none" stroke="#e07a55" stroke-width="1.2" stroke-linecap="round" stroke-linejoin="round"><path d="M4 12.6 A6 6 0 1 1 13 10.4"/><path d="M9.6 9.6 L13.2 10.8 L14.4 7.2"/></svg><div class="b" style="left:255px;top:288.6px;width:18.5px;height:18.3px;background:#fff;border:1.3px solid #c4c4c4;border-radius:2.5px"></div><span class="t" style="left:17.6px;top:322.0px;font-size:15.71px;color:#262e30;">Timelapse</span><div class="inp" style="left:254.0px;top:316.1px;width:128.6px;height:26.4px"></div><svg style="left:261.0px;top:325.4px" width="12" height="8" viewBox="0 0 12 8" fill="none" stroke="#8c8c8c" stroke-width="1.1" stroke-linecap="round" stroke-linejoin="round"><path d="M1 1.5 L6 6.3 L11 1.5"/></svg><span class="t" style="left:276.6px;top:321.0px;font-size:17.01px;color:#262e30;">Traditional</span><span class="t" style="left:17.6px;top:353.0px;font-size:15.36px;color:#262e30;">Fuzzy Skin</span><div class="inp" style="left:254.0px;top:347.7px;width:128.6px;height:26.0px"></div><svg style="left:261.0px;top:356.6px" width="12" height="8" viewBox="0 0 12 8" fill="none" stroke="#8c8c8c" stroke-width="1.1" stroke-linecap="round" stroke-linejoin="round"><path d="M1 1.5 L6 6.3 L11 1.5"/></svg><span class="t" style="left:276.6px;top:352.0px;font-size:16.15px;color:#262e30;">None</span><svg style="left:0;top:0" width="1" height="1" fill="none" stroke="#454d4f" stroke-width="1.20" stroke-linejoin="round"><path d="M11.31 396.00 L11.26 396.48 L11.12 396.94 L10.87 397.37 L10.40 397.71 L9.91 398.01 L9.61 398.32 L9.36 398.64 L9.14 398.97 L8.97 399.32 L8.81 399.69 L8.69 400.11 L8.68 400.68 L8.62 401.27 L8.37 401.70 L8.04 402.05 L7.65 402.33 L7.22 402.53 L6.75 402.63 L6.25 402.64 L5.71 402.40 L5.22 402.12 L4.79 402.02 L4.39 401.96 L4.00 401.94 L3.61 401.96 L3.21 402.02 L2.78 402.12 L2.29 402.40 L1.75 402.64 L1.25 402.63 L0.78 402.53 L0.35 402.33 L-0.04 402.05 L-0.37 401.70 L-0.62 401.27 L-0.68 400.68 L-0.69 400.11 L-0.81 399.69 L-0.97 399.32 L-1.14 398.97 L-1.36 398.64 L-1.61 398.32 L-1.91 398.01 L-2.40 397.71 L-2.87 397.37 L-3.12 396.94 L-3.26 396.48 L-3.31 396.00 L-3.26 395.52 L-3.12 395.06 L-2.87 394.63 L-2.40 394.29 L-1.91 393.99 L-1.61 393.68 L-1.36 393.36 L-1.14 393.03 L-0.97 392.68 L-0.81 392.31 L-0.69 391.89 L-0.68 391.32 L-0.62 390.73 L-0.37 390.30 L-0.04 389.95 L0.35 389.67 L0.78 389.47 L1.25 389.37 L1.75 389.36 L2.29 389.60 L2.78 389.88 L3.21 389.98 L3.61 390.04 L4.00 390.06 L4.39 390.04 L4.79 389.98 L5.22 389.88 L5.71 389.60 L6.25 389.36 L6.75 389.37 L7.22 389.47 L7.65 389.67 L8.04 389.95 L8.37 390.30 L8.62 390.73 L8.68 391.32 L8.69 391.89 L8.81 392.31 L8.97 392.68 L9.14 393.03 L9.36 393.36 L9.61 393.68 L9.91 393.99 L10.40 394.29 L10.87 394.63 L11.12 395.06 L11.26 395.52 Z"/><circle cx="4.0" cy="396.0" r="2.7"/></svg><span class="t" style="left:21.0px;top:388.0px;font-size:15.78px;color:#262e30;font-weight:bold;">Advanced</span><div class="b" style="left:103.5px;top:394.3px;width:316.8px;height:1.0px;background:#efefef"></div><svg style="left:0;top:0" width="1" height="1"><path d="M4.6 260.7 L405.2 257.6 L405.4 330.7 L4.6 328.5 Z M10.6 265.9 L398.2 262.4 L398.2 324.6 L10.6 322.0 Z" fill="#0e6bcb" fill-rule="evenodd" stroke="#0e6bcb" stroke-width="1.2" stroke-linejoin="round"/></svg></div><div class="b" style="left:424.0px;top:360.5px;width:19.0px;height:411.5px;background:#efefef"></div><div class="b" style="left:431.6px;top:492.0px;width:5.6px;height:194.0px;background:#6e6e6e;border-radius:3px"></div></div><div id="dlg"><div class="b" style="left:0.0px;top:0.0px;width:835.0px;height:32.8px;background:#f3f3f3"></div><span class="t" style="left:7.9px;top:10.0px;font-size:13.37px;color:#787878;">Bambu Studio info</span><svg style="left:810.4px;top:10.7px" width="12" height="12" viewBox="0 0 12 12" stroke="#7a7a7a" stroke-width="1.1" stroke-linecap="round"><path d="M0.8 0.8 L11.2 11.2 M11.2 0.8 L0.8 11.2"/></svg><svg style="left:39.2px;top:57.2px" width="56" height="50" viewBox="0 0 56 50"><path d="M28 6 L49.4 43.2 H6.6 Z" fill="#ea6337" stroke="#ea6337" stroke-width="10.5" stroke-linejoin="round"/><rect x="25.9" y="18" width="4.2" height="15.4" rx="1.4" fill="#fff"/><circle cx="28" cy="37.2" r="2.4" fill="#fff"/></svg><span class="t" style="left:122.6px;top:57.0px;font-size:13.33px;color:#454c4e;">Spiral mode only works when wall loops is 1, support is disabled, top shell layers is 0, sparse infill</span><span class="t" style="left:122.6px;top:75.0px;font-size:13.50px;color:#454c4e;">density is 0 and timelapse type is traditional.</span><span class="t" style="left:122.6px;top:110.0px;font-size:13.23px;color:#454c4e;">Change these settings automatically?</span><span class="t" style="left:122.6px;top:128.0px;font-size:13.33px;color:#454c4e;">Yes - Change these settings and enable spiral/vase mode automatically</span><span class="t" style="left:122.6px;top:146.0px;font-size:13.54px;color:#454c4e;">No - Cancel enabling spiral mode</span><div class="b" style="left:650.2px;top:164.9px;width:66.4px;height:26.3px;background:#00ae42;border-radius:13.2px"></div><span class="t" style="left:670.5px;top:171.0px;font-size:15.63px;color:#fff;">Yes</span><div class="b" style="left:733.9px;top:164.9px;width:65.7px;height:26.3px;background:#fff;border:1.3px solid #3b4446;border-radius:13.2px"></div><span class="t" style="left:756.0px;top:170.0px;font-size:16.43px;color:#262e30;">No</span></div></body></html>
